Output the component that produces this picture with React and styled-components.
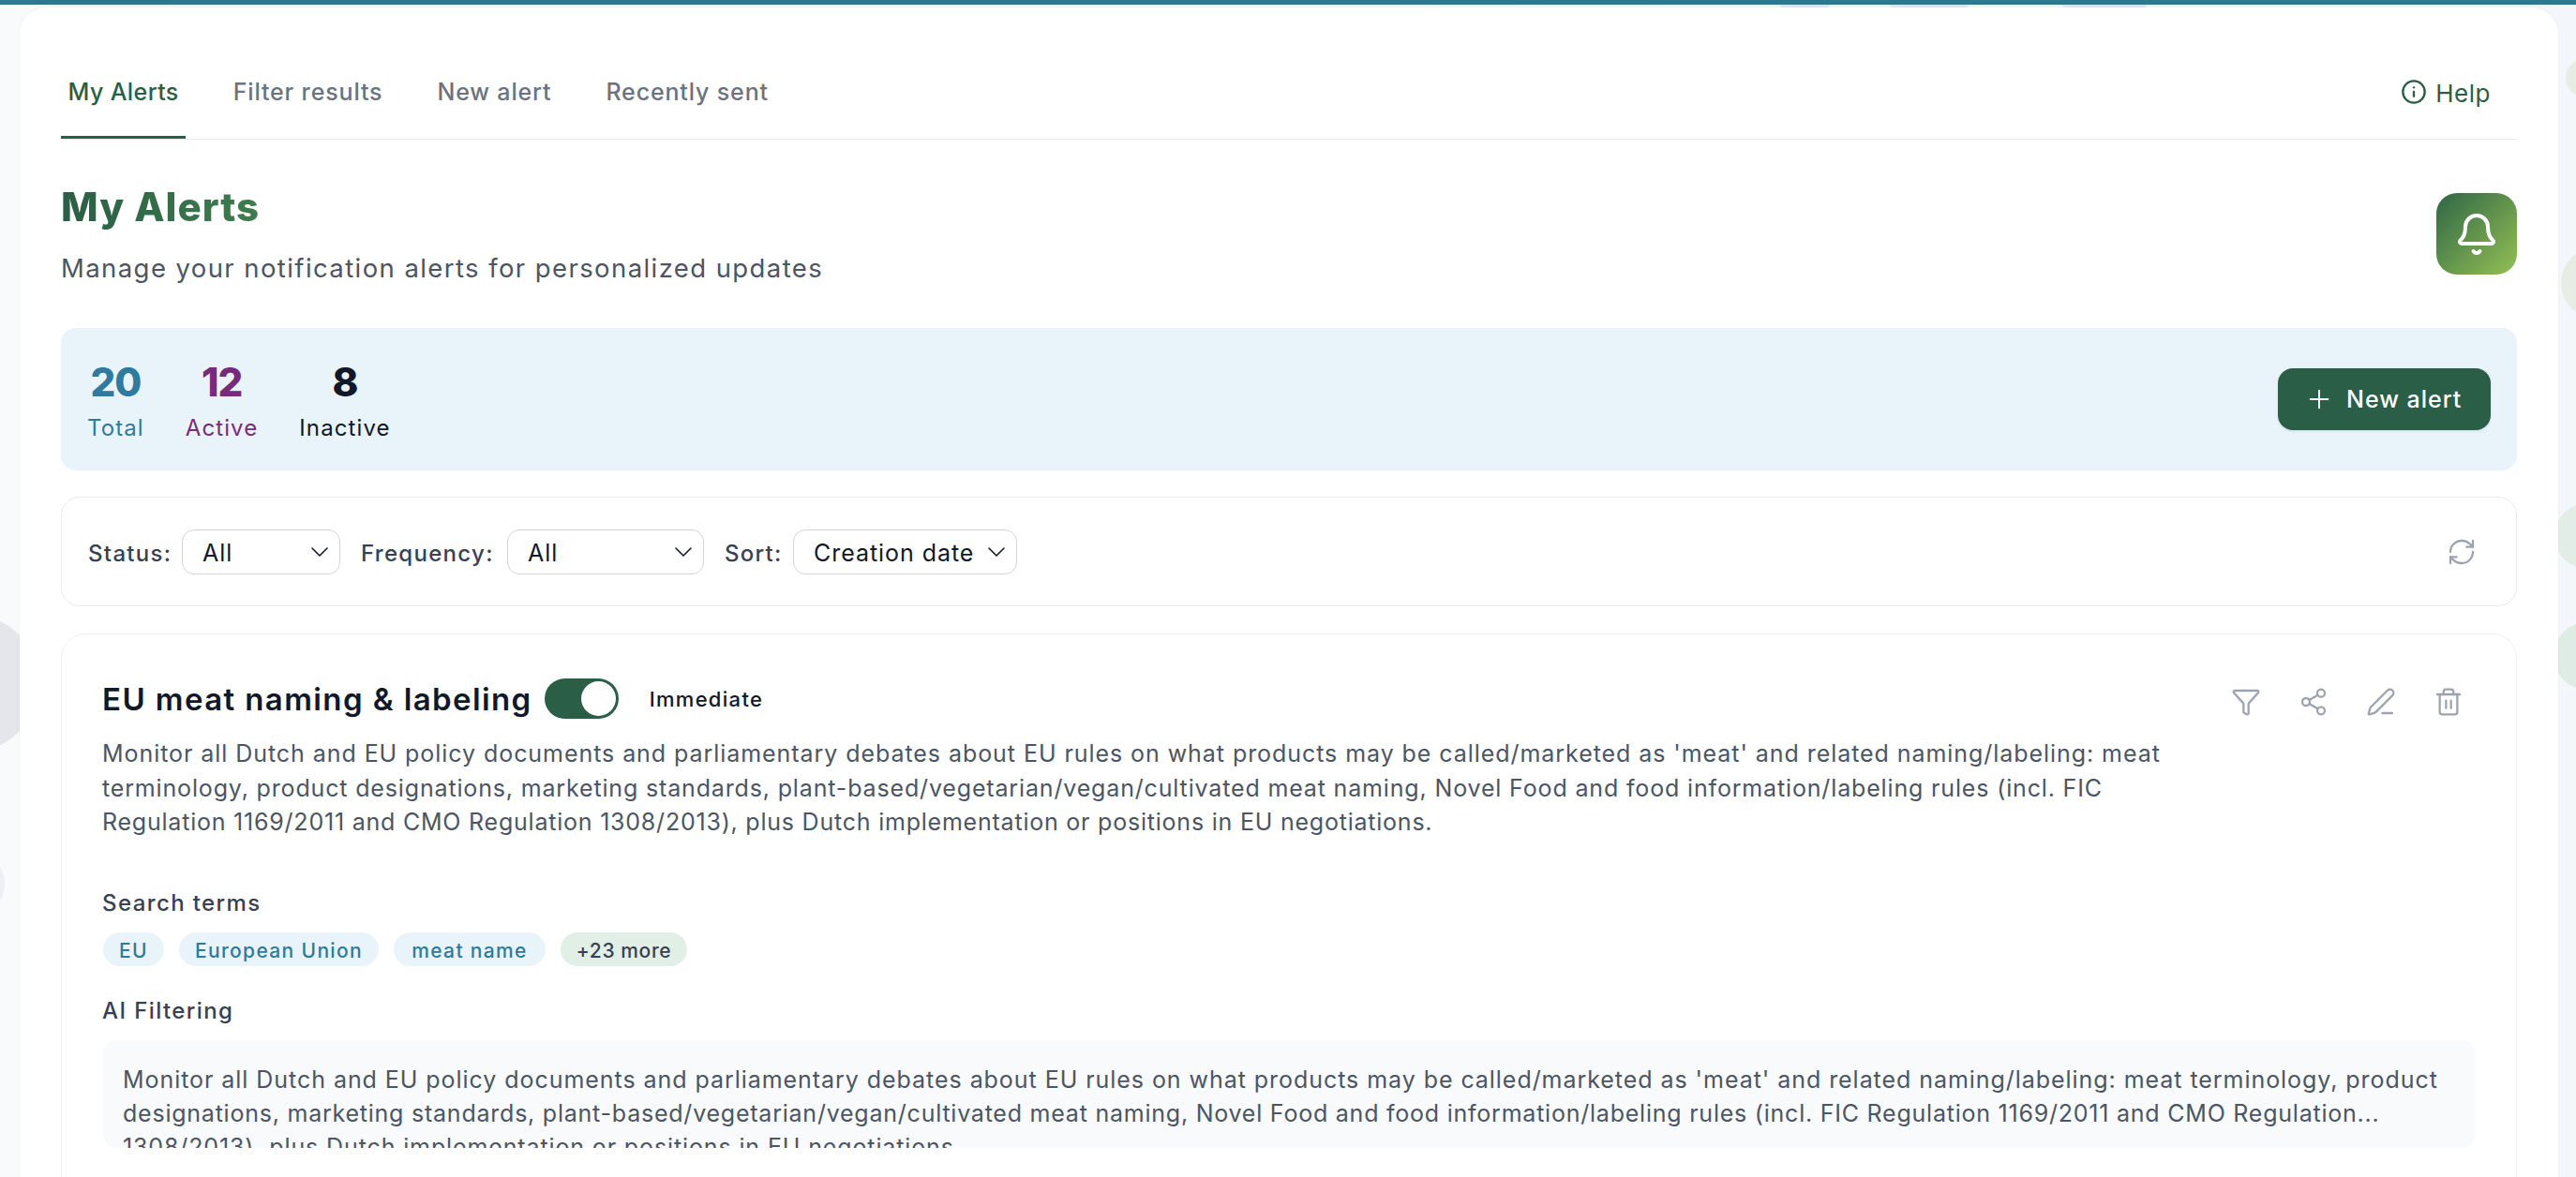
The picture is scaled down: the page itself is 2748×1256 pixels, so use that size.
import React from "react";
import styled, { createGlobalStyle } from "styled-components";
import { Info, Bell, Plus, ChevronDown, RefreshCw, Filter, Share2, PenLine, Trash2 } from "lucide-react";

const Global = createGlobalStyle`
  html, body { margin: 0; padding: 0; background: #f7f9fb; }
  * { box-sizing: border-box; }
  body { font-family: Inter, "Noto Sans", sans-serif; color: #111827; }
`;

const Page = styled.div`
  position: relative;
  height: 100vh;
  overflow: hidden;
  background: linear-gradient(90deg, #f9fafc 0%, #f3f6fa 100%);
`;
const TopBar = styled.div`
  height: 5px;
  background: #33748f;
  position: relative;
  z-index: 2;
`;
const Blob = styled.div`
  position: absolute;
  border-radius: 50%;
  left: ${p => p.$x - p.$r}px;
  top: ${p => p.$y - p.$r}px;
  width: ${p => p.$r * 2}px;
  height: ${p => p.$r * 2}px;
  background: ${p => p.$c};
`;
const Sliver = styled.div`
  position: absolute;
  top: 5px;
  height: 3px;
  left: ${p => p.$x}px;
  width: ${p => p.$w}px;
  background: #e2e5f1;
  border-radius: 0 0 4px 4px;
`;
const Sheet = styled.div`
  position: relative;
  z-index: 1;
  margin: 3px 19px 0 21px;
  padding: 0 44px 60px;
  background: #fff;
  border-radius: 28px 28px 0 0;
  box-shadow: 0 0 3px rgba(17, 24, 39, 0.06);
`;
const Nav = styled.nav`
  display: flex;
  justify-content: space-between;
  height: 141px;
  padding-top: 40px;
  border-bottom: 1.5px solid #e5e7eb;
`;
const Tabs = styled.div`
  display: flex;
  gap: 43px;
`;
const Tab = styled.div`
  display: flex;
  align-items: center;
  height: 100px;
  padding: 3px 7.5px 0;
  font-size: 25px;
  font-weight: 500;
  letter-spacing: ${p => (p.$active ? "0.4px" : "0.85px")};
  color: ${p => (p.$active ? "#2a5e46" : "#6b7280")};
  border-bottom: 3px solid ${p => (p.$active ? "#2a5e46" : "transparent")};
`;
const HelpLink = styled.div`
  display: flex;
  align-items: center;
  gap: 9px;
  height: 100px;
  margin-right: 28px;
  font-size: 26px;
  font-weight: 400;
  letter-spacing: 0.5px;
  color: #2a5e46;
`;
const HelpText = styled.span`
  padding-top: 3px;
`;
const Header = styled.header`
  display: flex;
  justify-content: space-between;
  align-items: flex-start;
  height: 110px;
  margin-top: 47px;
`;
const Title = styled.h1`
  margin: -1px 0 0;
  font-size: 42px;
  line-height: 52px;
  font-weight: 800;
  letter-spacing: 1px;
  width: fit-content;
  background: linear-gradient(90deg, #2a5e46, #3f7d4d);
  -webkit-background-clip: text;
  background-clip: text;
  color: transparent;
`;
const Subtitle = styled.p`
  margin: 20px 0 0;
  font-size: 27.5px;
  line-height: 38px;
  letter-spacing: 1.41px;
  color: #4b5563;
`;
const BellTile = styled.div`
  display: flex;
  align-items: center;
  justify-content: center;
  width: 86px;
  height: 87px;
  margin-top: 10px;
  border-radius: 22px;
  color: #fff;
  background: linear-gradient(135deg, #2f6645 0%, #94c055 100%);
`;
const StatsPanel = styled.section`
  display: flex;
  justify-content: space-between;
  align-items: center;
  height: 152px;
  margin-top: 44px;
  padding: 0 28px;
  border-radius: 16px;
  background: #e8f4fa;
`;
const Stats = styled.div`
  display: flex;
  gap: 44px;
  margin-top: 6px;
`;
const Stat = styled.div`
  display: flex;
  flex-direction: column;
  align-items: center;
  color: ${p => p.$c};
`;
const StatValue = styled.div`
  font-size: 42px;
  line-height: 50px;
  font-weight: 800;
  letter-spacing: -1px;
`;
const StatLabel = styled.div`
  margin-top: 6px;
  font-size: 24px;
  line-height: 36px;
  letter-spacing: 1.1px;
`;
const PrimaryButton = styled.div`
  display: flex;
  align-items: center;
  gap: 13px;
  width: 227px;
  height: 66px;
  padding-left: 28px;
  border-radius: 16px;
  background: #2a5e46;
  color: #fff;
  font-size: 25px;
  font-weight: 500;
  letter-spacing: 1px;
  box-shadow: 0 1px 3px rgba(17, 24, 39, 0.12);
`;
const FilterPanel = styled.section`
  display: flex;
  justify-content: space-between;
  align-items: center;
  height: 117px;
  margin-top: 28px;
  padding: 0 42px 0 28px;
  border: 1.5px solid #e9eaee;
  border-radius: 20px;
`;
const Filters = styled.div`
  display: flex;
  align-items: center;
`;
const FilterLabel = styled.span`
  width: ${p => p.$w}px;
  margin-right: 14px;
  padding-top: 3px;
  font-size: 24px;
  font-weight: 500;
  letter-spacing: 1.3px;
  white-space: nowrap;
  color: #374151;
`;
const SelectBox = styled.div`
  display: flex;
  align-items: center;
  justify-content: space-between;
  width: ${p => p.$w}px;
  height: 48px;
  margin-right: 22px;
  padding: 0 5px 0 21px;
  border: 1.5px solid #d1d5db;
  border-radius: 13px;
  font-size: 25px;
  letter-spacing: 0.95px;
  color: #111827;
`;
const SelectValue = styled.span`
  padding-top: 3px;
`;
const IconButton = styled.div`
  display: flex;
  align-items: center;
  justify-content: center;
  color: #9ca3af;
  width: ${p => p.$size}px;
  height: ${p => p.$size}px;
`;
const AlertCard = styled.article`
  margin-top: 29px;
  padding: 47px 44px 60px;
  border: 1.5px solid #eef0f2;
  border-radius: 26px;
`;
const AlertHead = styled.div`
  display: flex;
  justify-content: space-between;
  height: 43px;
`;
const AlertTitleRow = styled.div`
  display: flex;
  align-items: center;
`;
const AlertName = styled.h2`
  margin: 0 13px 0 -1px;
  padding-top: 1px;
  font-size: 33px;
  font-weight: 600;
  letter-spacing: 1.4px;
  color: #111827;
`;
const Toggle = styled.div`
  display: flex;
  justify-content: flex-end;
  align-items: center;
  width: 79px;
  height: 43px;
  padding-right: 3px;
  border-radius: 22px;
  background: #2a5e46;
`;
const Knob = styled.div`
  width: 37px;
  height: 37px;
  border-radius: 50%;
  background: #fff;
`;
const Frequency = styled.span`
  margin-left: 33px;
  font-size: 22px;
  font-weight: 500;
  letter-spacing: 1.3px;
  color: #111827;
`;
const Actions = styled.div`
  display: flex;
  gap: 16px;
  margin-top: -3px;
`;
const Description = styled.p`
  margin: 19px 0 -1px -1px;
  font-size: 25px;
  line-height: 36.5px;
  color: #4b5563;
  white-space: nowrap;
`;
const TextLine = styled.span`
  display: block;
  letter-spacing: ${p => p.$ls}px;
`;
const SectionLabel = styled.div`
  height: 36px;
  margin: ${p => p.$top}px 0 0 -1px;
  padding-top: 1px;
  font-size: 24px;
  line-height: 36px;
  font-weight: 500;
  letter-spacing: 1.4px;
  color: #374151;
`;
const Chips = styled.div`
  display: flex;
  gap: 16px;
  margin-top: 14px;
`;
const Chip = styled.span`
  display: flex;
  align-items: center;
  justify-content: center;
  width: ${p => p.$w}px;
  height: 36px;
  padding-top: 3px;
  border-radius: 18px;
  font-size: 21px;
  font-weight: 500;
  letter-spacing: ${p => (p.$more ? "0.6px" : "1.35px")};
  color: ${p => (p.$more ? "#374151" : "#2d7a9c")};
  background: ${p => (p.$more ? "#e1efe6" : "#e8f4fa")};
`;
const AiBox = styled.div`
  height: 115px;
  margin-top: 14px;
  padding: 24px 21px 0;
  overflow: hidden;
  border-radius: 14px;
  background: #f9fafb;
  font-size: 25px;
  line-height: 36px;
  color: #4b5563;
  white-space: nowrap;
`;

const icon = { strokeWidth: 1.7 };

export default function App() {
  return (
    <Page>
      <Global />
      <TopBar />
      <Sliver $x={1899} $w={53} />
      <Sliver $x={2016} $w={84} />
      <Sliver $x={2200} $w={90} />
      <Blob $x={-31} $y={729} $r={73} $c="#e5e5ec" />
      <Blob $x={-30} $y={943} $r={35} $c="#eeeef4" />
      <Blob $x={2758} $y={83} $r={21} $c="#e7ede5" />
      <Blob $x={2770} $y={302} $r={38} $c="#e7ede5" />
      <Blob $x={2760} $y={572} $r={35} $c="#e3ede7" />
      <Blob $x={2760} $y={700} $r={36} $c="#dfece6" />
      <Sheet>
        <Nav>
          <Tabs>
            <Tab $active>My Alerts</Tab>
            <Tab>Filter results</Tab>
            <Tab>New alert</Tab>
            <Tab>Recently sent</Tab>
          </Tabs>
          <HelpLink>
            <Info size={28} strokeWidth={2} />
            <HelpText>Help</HelpText>
          </HelpLink>
        </Nav>
        <Header>
          <div>
            <Title>My Alerts</Title>
            <Subtitle>Manage your notification alerts for personalized updates</Subtitle>
          </div>
          <BellTile><Bell size={48} strokeWidth={2} /></BellTile>
        </Header>
        <StatsPanel>
          <Stats>
            <Stat $c="#2f7a9e"><StatValue>20</StatValue><StatLabel>Total</StatLabel></Stat>
            <Stat $c="#782b7c"><StatValue>12</StatValue><StatLabel>Active</StatLabel></Stat>
            <Stat $c="#111827"><StatValue>8</StatValue><StatLabel>Inactive</StatLabel></Stat>
          </Stats>
          <PrimaryButton>
            <Plus size={32} strokeWidth={1.5} />
            <span>New alert</span>
          </PrimaryButton>
        </StatsPanel>
        <FilterPanel>
          <Filters>
            <FilterLabel $w={86}>Status:</FilterLabel>
            <SelectBox $w={169}><SelectValue>All</SelectValue><ChevronDown size={32} strokeWidth={1.2} /></SelectBox>
            <FilterLabel $w={142}>Frequency:</FilterLabel>
            <SelectBox $w={210}><SelectValue>All</SelectValue><ChevronDown size={32} strokeWidth={1.2} /></SelectBox>
            <FilterLabel $w={59}>Sort:</FilterLabel>
            <SelectBox $w={239}><SelectValue>Creation date</SelectValue><ChevronDown size={32} strokeWidth={1.2} /></SelectBox>
          </Filters>
          <IconButton $size={32}><RefreshCw size={32} {...icon} /></IconButton>
        </FilterPanel>
        <AlertCard>
          <AlertHead>
            <AlertTitleRow>
              <AlertName>EU meat naming &amp; labeling</AlertName>
              <Toggle><Knob /></Toggle>
              <Frequency>Immediate</Frequency>
            </AlertTitleRow>
            <Actions>
              <IconButton $size={56}><Filter size={32} {...icon} /></IconButton>
              <IconButton $size={56}><Share2 size={32} {...icon} /></IconButton>
              <IconButton $size={56}><PenLine size={32} {...icon} /></IconButton>
              <IconButton $size={56}><Trash2 size={32} {...icon} /></IconButton>
            </Actions>
          </AlertHead>
          <Description>
            <TextLine $ls={0.94}>Monitor all Dutch and EU policy documents and parliamentary debates about EU rules on what products may be called/marketed as 'meat' and related naming/labeling: meat</TextLine>
            <TextLine $ls={0.845}>terminology, product designations, marketing standards, plant-based/vegetarian/vegan/cultivated meat naming, Novel Food and food information/labeling rules (incl. FIC</TextLine>
            <TextLine $ls={0.78}>Regulation 1169/2011 and CMO Regulation 1308/2013), plus Dutch implementation or positions in EU negotiations.</TextLine>
          </Description>
          <SectionLabel $top={50}>Search terms</SectionLabel>
          <Chips>
            <Chip $w={65}>EU</Chip>
            <Chip $w={213}>European Union</Chip>
            <Chip $w={162}>meat name</Chip>
            <Chip $w={135} $more>+23 more</Chip>
          </Chips>
          <SectionLabel $top={29}>AI Filtering</SectionLabel>
          <AiBox>
            <TextLine $ls={0.95}>Monitor all Dutch and EU policy documents and parliamentary debates about EU rules on what products may be called/marketed as 'meat' and related naming/labeling: meat terminology, product</TextLine>
            <TextLine $ls={0.77}>designations, marketing standards, plant-based/vegetarian/vegan/cultivated meat naming, Novel Food and food information/labeling rules (incl. FIC Regulation 1169/2011 and CMO Regulation...</TextLine>
            <TextLine $ls={0.875}>1308/2013), plus Dutch implementation or positions in EU negotiations.</TextLine>
          </AiBox>
        </AlertCard>
      </Sheet>
    </Page>
  );
}
